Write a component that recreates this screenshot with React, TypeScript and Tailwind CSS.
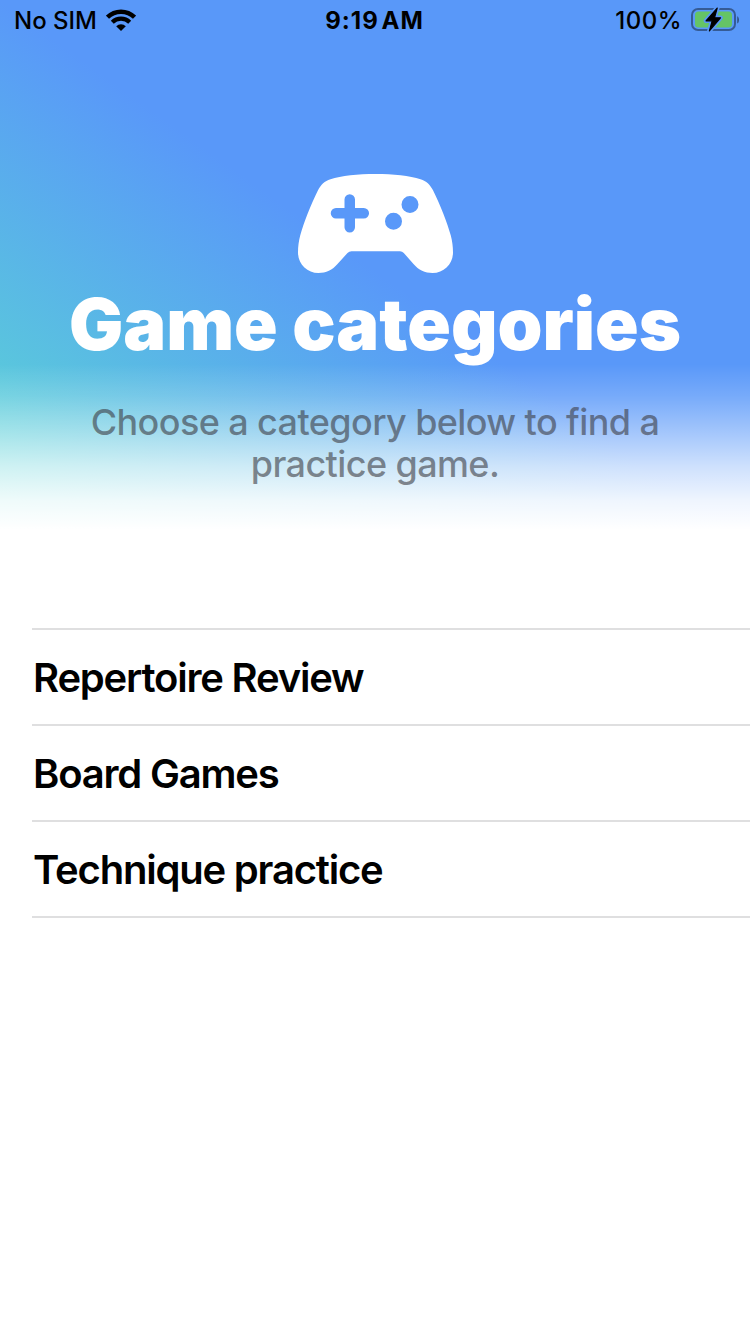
import React from "react";

const categories = ["Repertoire Review", "Board Games", "Technique practice"];

function WifiIcon() {
  return (
    <svg className="-mt-px ml-[9px] h-[23px] w-[30px]" viewBox="0 0 30 23" fill="none" stroke="#000">
      <path d="M1.5 8.2A19.3 19.3 0 0 1 28.5 8.2" strokeWidth="4.4" />
      <path d="M6.3 13.2A12.4 12.4 0 0 1 23.7 13.2" strokeWidth="4.2" />
      <path d="M10.2 17.2a6.900 6.900 0 0 1 9.600 0L15 22Z" fill="#000" stroke="none" />
    </svg>
  );
}

function BatteryIcon() {
  return (
    <svg className="-mt-[2px] ml-[9px] h-[26px] w-[49px]" viewBox="0 0 49 26">
      <rect x="1" y="2" width="43" height="21" rx="6" fill="none" stroke="#000" strokeOpacity=".4" strokeWidth="2" />
      <path d="M46.200 9.200c2.400 1.200 2.400 6.200 0 7.400Z" fill="#000" fillOpacity=".45" />
      <rect x="4" y="4.5" width="37" height="16" rx="3.5" fill="#65c466" />
      <path d="M26.200 1.200 15 13.800h6.200l-2.800 10L29.500 10.800H23.500Z" fill="#000" stroke="#5998f9" strokeWidth="4.6" strokeLinejoin="round" />
      <path d="M26.200 1.200 15 13.800h6.200l-2.800 10L29.500 10.800H23.500Z" fill="#000" stroke="#000" strokeWidth="1.2" strokeLinejoin="round" />
    </svg>
  );
}

function ControllerIcon() {
  return (
    <svg className="mt-[134px] ml-px h-[99px] w-[155px] shrink-0" viewBox="0 0 155 99" fill="#fff">
      <path
        fillRule="evenodd"
        d="M77.5 0C60 0 43 1.7 32.5 5.2C26.5 7.2 23 10.5 20 16.2C13 30 5.500 49.500 2.200 61.500C.8 67 0 72 0 78.500C0 90 9 99 20.500 99C28 99 34.500 96 39.500 90L49.500 79Q51.200 77.200 53.500 77.200H102Q104.200 77.200 105.800 79L115.500 90C120.500 96 127 99 134.500 99C146 99 155 90 155 78.500C155 72 154.200 67 152.800 61.500C149.500 49.500 142 30 135 16.200C132 10.500 128.500 7.200 122.500 5.200C112 1.700 95 0 77.500 0ZM46.500 25.500V34H38A5.250 5.250 0 0 0 38 44.500H46.500V53.200A5.250 5.250 0 0 0 57 53.200V44.500H65.800A5.250 5.250 0 0 0 65.800 34H57V25.500A5.250 5.250 0 0 0 46.500 25.500ZM103.500 30.500A8.500 8.500 0 1 0 120.500 30.500A8.500 8.500 0 1 0 103.500 30.500ZM87 47.300A8.500 8.500 0 1 0 104 47.300A8.500 8.500 0 1 0 87 47.300Z"
      />
    </svg>
  );
}

export default function App() {
  return (
    <main className="flex h-[1334px] w-[750px] flex-col overflow-hidden bg-white font-['Inter',sans-serif]">
      <section className="h-[628px] bg-[linear-gradient(to_bottom,rgba(255,255,255,0)_364px,rgba(255,255,255,0.18)_396px,rgba(255,255,255,0.43)_430px,rgba(255,255,255,0.7)_466px,rgba(255,255,255,0.9)_500px,white_530px),linear-gradient(35.8deg,#5adfce_5%,#5998f9_53.7%)]">
        <header className="grid h-10 grid-cols-[1fr_auto_1fr] items-center pt-0.5 pl-[14px] pr-[10px] text-[24px] leading-[38px] font-medium text-black">
          <div className="flex items-center">
            <span>No SIM</span>
            <WifiIcon />
          </div>
          <span className="mr-[5px] text-center font-bold tracking-[1px] [word-spacing:-4px]">9:19 AM</span>
          <div className="flex items-center justify-end">
            <span className="tracking-[0.5px]">100%</span>
            <BatteryIcon />
          </div>
        </header>
        <div className="flex flex-col items-center">
          <ControllerIcon />
          <h1 className="mt-[9px] text-[72px] leading-[84px] font-black whitespace-nowrap text-white">
            Game categories
          </h1>
          <p className="mt-[35px] text-center text-[36px] leading-[42px] font-medium tracking-[-0.6px] text-[#3c3c43]/60">
            Choose a category below to find a
            <br />
            practice game.
          </p>
        </div>
      </section>
      <ul className="ml-8 border-t-2 border-[#dfdfe0]">
        {categories.map((name) => (
          <li key={name} className="h-24 border-b-2 border-[#dfdfe0] pl-px text-[40px] leading-[96px] font-semibold tracking-[-1.2px] text-black">
            {name}
          </li>
        ))}
      </ul>
    </main>
  );
}
